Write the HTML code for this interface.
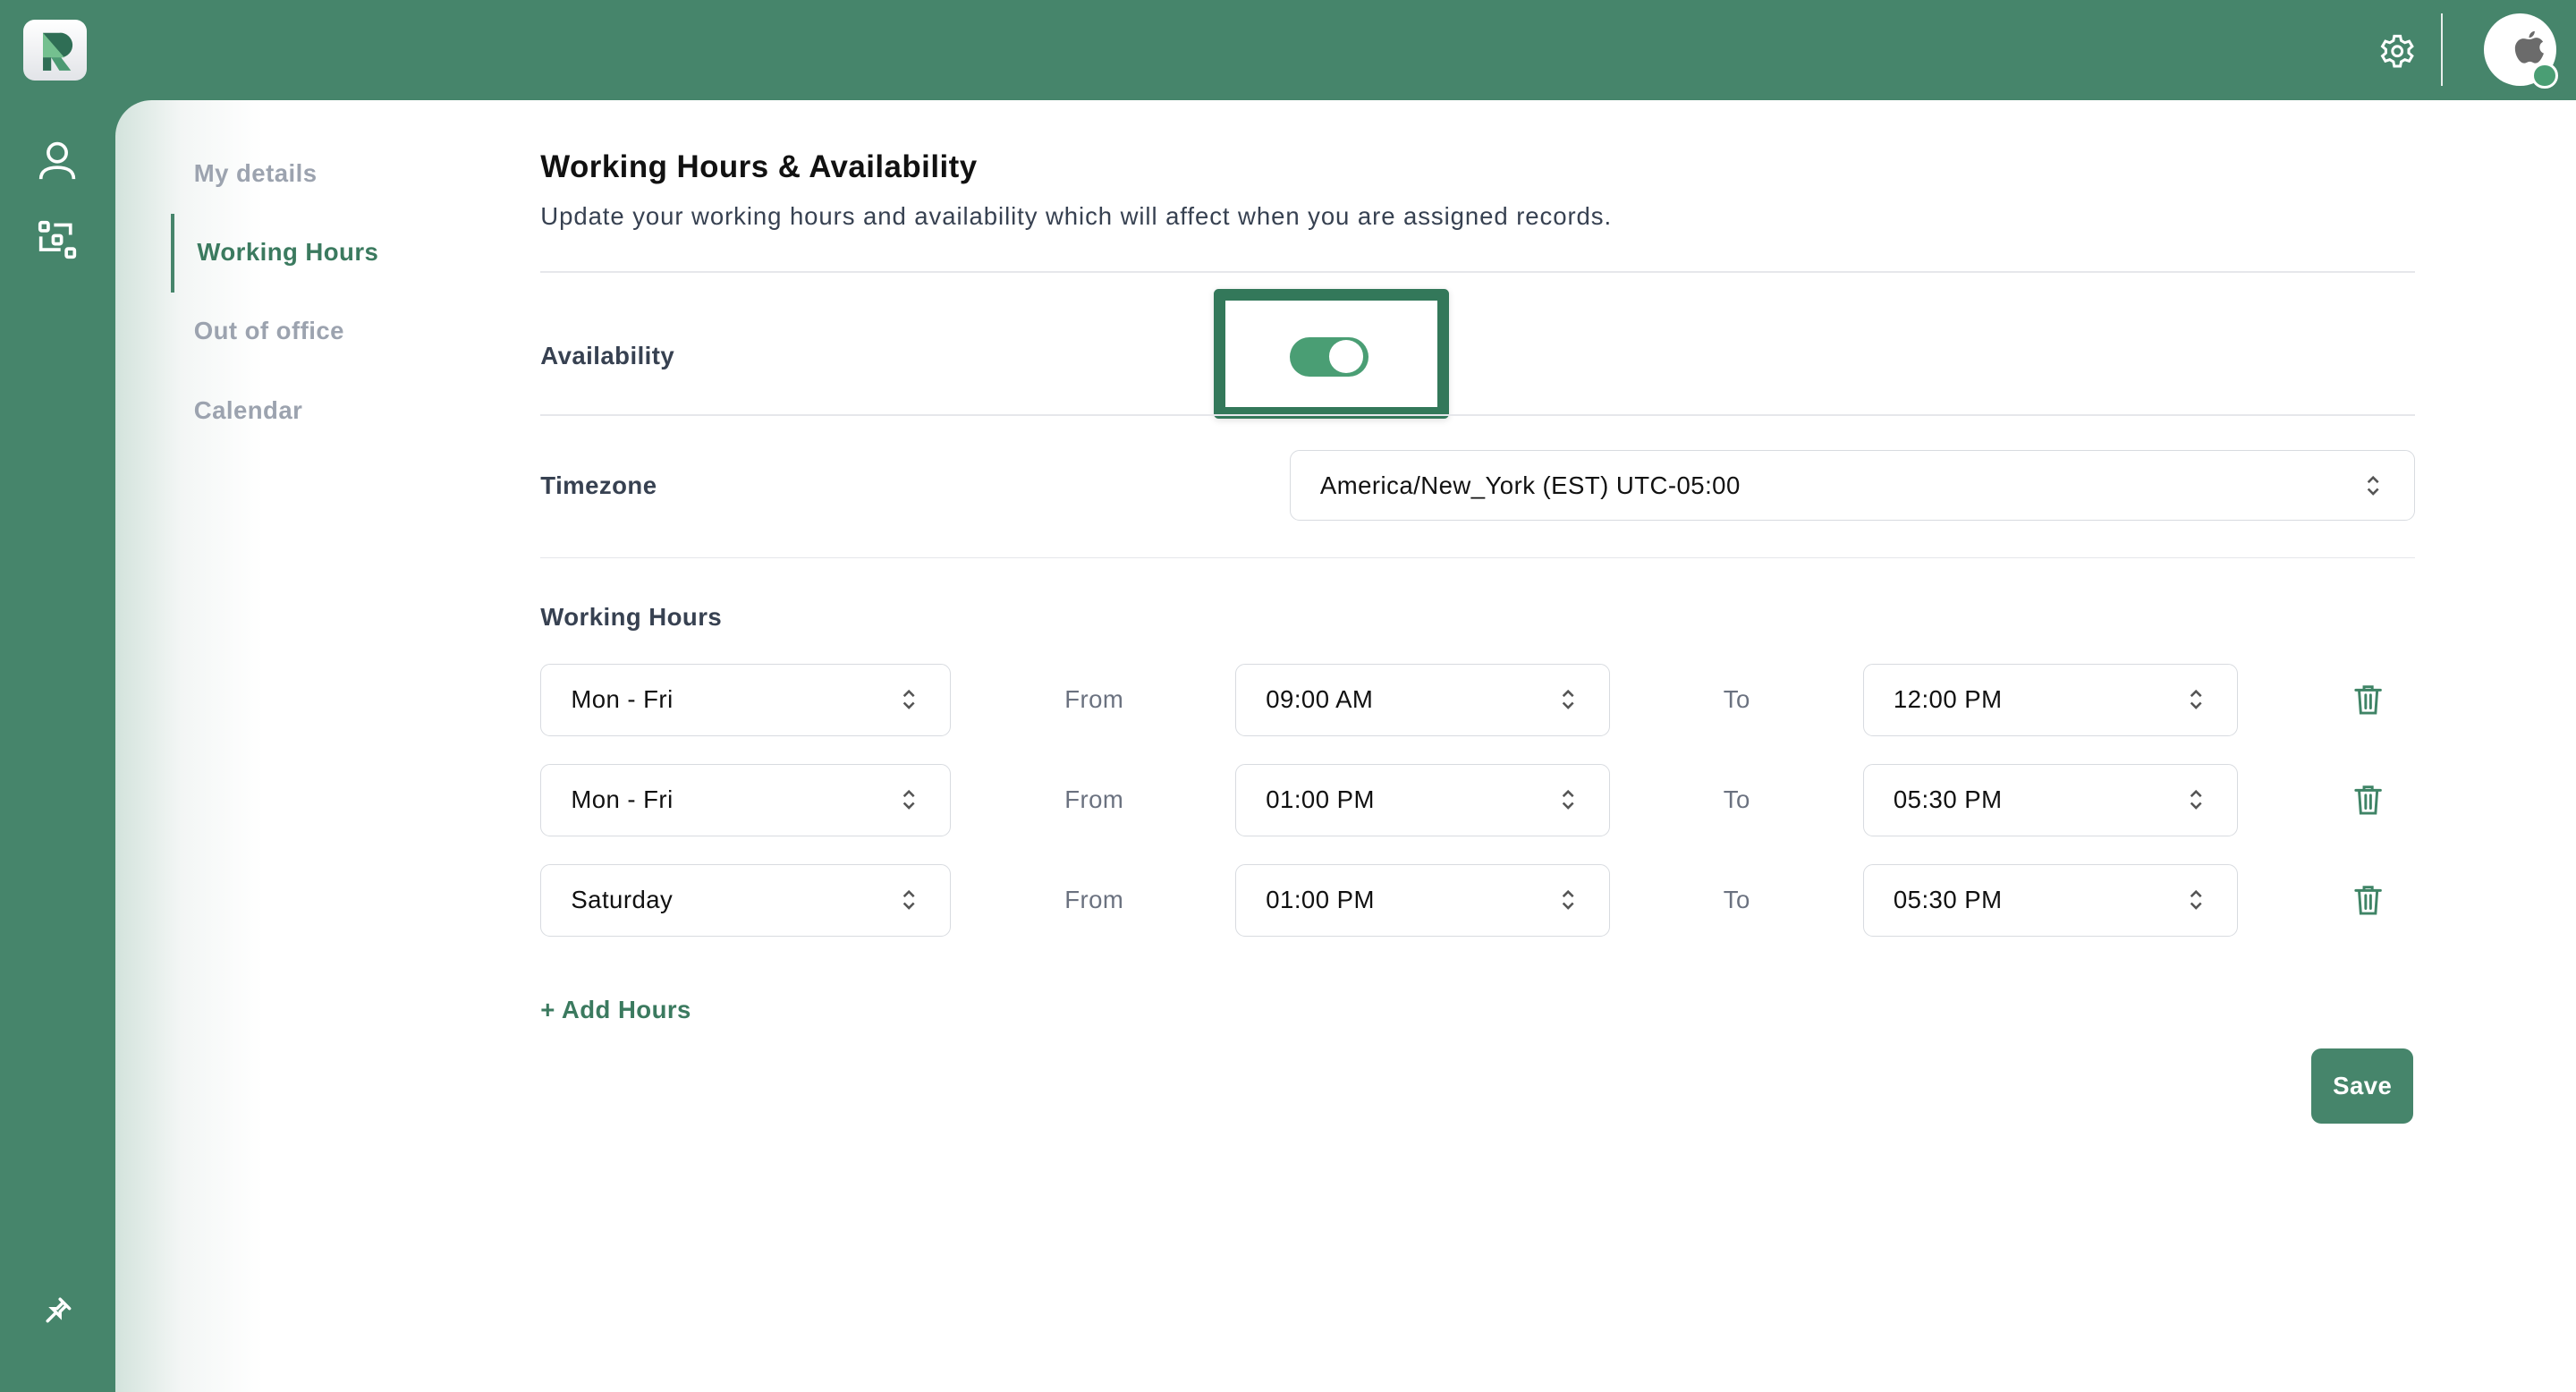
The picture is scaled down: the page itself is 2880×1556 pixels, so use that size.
<!DOCTYPE html>
<html><head><meta charset="utf-8">
<style>
*{margin:0;padding:0;box-sizing:border-box}
html,body{width:2880px;height:1556px;overflow:hidden;background:#46856b}
#w{position:absolute;left:0;top:0;width:1568px;height:847px;zoom:1.83673;font-family:"Liberation Sans",sans-serif;color:#1f2937;background:#46856b;letter-spacing:0.25px}
.a{position:absolute}
.panel{left:70px;top:61px;width:1498px;height:786px;background:linear-gradient(90deg,#d3e3dc 0px,#f3f6f5 40px,#fff 90px);border-top-left-radius:22px}
.nav{font-size:15px;color:#9ca3af;left:118px;font-weight:bold}
.t{font-size:15px}
.hr{height:1px;background:#e6e7eb;left:329px;width:1141px}
.sel{border:1px solid #d8dbe0;border-radius:6px;background:#fff;height:44px;font-size:15px;color:#111;padding-left:18px;line-height:42px}
.sel svg{position:absolute;right:20px;top:14px}
.lbl{font-size:15px;font-weight:bold;color:#374151}
.ft{font-size:15px;color:#6b7280}
</style></head><body>
<div id="w">
<div class="a" style="left:14px;top:12px;width:39px;height:37px;border-radius:7px;background:linear-gradient(#fff,#e2e4e8)">
<svg width="39" height="37" viewBox="0 0 39 37"><path d="M12 8h10a7.5 7.5 0 0 1 1 15h-11z" fill="#2f6e55"/><path d="M12 8l13 15h-13z" fill="#74c08f"/><path d="M12 23h5v8h-5z" fill="#2f6e55"/><path d="M17 23h6l6 8h-7z" fill="#4c9a72"/></svg></div>
<svg class="a" style="left:23px;top:85px" width="24" height="26" viewBox="0 0 24 26" fill="none" stroke="#fff" stroke-width="2"><circle cx="12" cy="8" r="5.5"/><path d="M2 24c0-5 4-7 10-7s10 2 10 7"/></svg>
<svg class="a" style="left:23px;top:134px" width="24" height="24" viewBox="0 0 24 24" fill="none" stroke="#fff" stroke-width="2"><rect x="1.5" y="1.5" width="5" height="5" rx="1"/><rect x="9.5" y="9.5" width="5" height="5" rx="1"/><rect x="17.5" y="17.5" width="5" height="5" rx="1"/><path d="M10 3h10v6M2 10v8h12"/></svg>
<svg class="a" style="left:26px;top:788px" width="19" height="19" viewBox="0 0 20 20" fill="none" stroke="#fff" stroke-width="2" stroke-linecap="round"><path d="M11 3l6 6M13 5l-4 4-3 0 5 5 0-3 4-4M8.5 11.5L3 17"/></svg>
<svg class="a" style="left:1448px;top:20px" width="22" height="22" viewBox="0 0 24 24" fill="none" stroke="#fff" stroke-width="1.8"><circle cx="12" cy="12" r="3.2"/><path d="M10 2h4l.6 3 2.4 1.4 2.9-1 2 3.4-2.3 2v2.4l2.3 2-2 3.4-2.9-1L14.6 19l-.6 3h-4l-.6-3L7 17.6l-2.9 1-2-3.4 2.3-2v-2.4l-2.3-2 2-3.4 2.9 1L9.4 5z"/></svg>
<div class="a" style="left:1486px;top:8px;width:1px;height:44px;background:#e8efec"></div>
<div class="a" style="left:1512px;top:8px;width:44px;height:44px;border-radius:50%;background:#fff"></div>
<svg class="a" style="left:1530px;top:18px" width="20" height="22" viewBox="0 0 20 22"><path d="M13 1c0 2-1.5 4-3.5 4 0-2 1.5-4 3.5-4zM10 6c1.5 0 2.5-1 4-1 2 0 3.5 1.5 4 2.5-3 1.5-2.5 6 .5 7-1 3-3 6-5 6-1.5 0-2-1-3.5-1s-2 1-3.5 1C4 20.5 1 16 1 11.5 1 8 3.5 5.5 6 5.5 7.5 5.5 8.5 6 10 6z" fill="#6b6b6b"/></svg>
<div class="a" style="left:1541px;top:38px;width:16px;height:16px;border-radius:50%;background:#4a9e74;border:2px solid #fff"></div>
<div class="a panel"></div>
<div class="a nav" style="top:97px">My details</div>
<div class="a" style="left:104px;top:130px;width:2px;height:48px;background:#46856b"></div>
<div class="a t" style="left:120px;top:145px;color:#3b7a5f;font-weight:bold">Working Hours</div>
<div class="a nav" style="top:193px">Out of office</div>
<div class="a nav" style="top:241px">Calendar</div>
<div class="a" style="left:329px;top:91px;font-size:19px;font-weight:bold;color:#111">Working Hours &amp; Availability</div>
<div class="a t" style="left:329px;top:123px;color:#374151;letter-spacing:0.5px">Update your working hours and availability which will affect when you are assigned records.</div>
<div class="a hr" style="top:165px"></div>
<div class="a lbl" style="left:329px;top:208px">Availability</div>
<div class="a" style="left:739px;top:176px;width:143px;height:79px;border:7.5px solid #33785a;border-radius:3px;background:#fff;box-shadow:0 1px 4px rgba(0,0,0,.12)"></div>
<div class="a" style="left:785px;top:205px;width:48px;height:24px;border-radius:12px;background:#4a9e74"></div>
<div class="a" style="left:809px;top:207px;width:21px;height:20px;border-radius:50%;background:#fff"></div>
<div class="a hr" style="top:252px"></div>
<div class="a lbl" style="left:329px;top:287px">Timezone</div>
<div class="a sel" style="left:785px;top:274px;width:685px;height:43px">America/New_York (EST) UTC-05:00<svg width="10" height="14" viewBox="0 0 10 14" fill="none" stroke="#555" stroke-width="1.4"><path d="M2 5l3-3 3 3M2 9l3 3 3-3"/></svg></div>
<div class="a hr" style="top:339px"></div>
<div class="a lbl" style="left:329px;top:367px">Working Hours</div>

<div class="a sel" style="left:329px;top:404px;width:250px">Mon - Fri<svg width="10" height="14" viewBox="0 0 10 14" fill="none" stroke="#555" stroke-width="1.4"><path d="M2 5l3-3 3 3M2 9l3 3 3-3"/></svg></div>
<div class="a ft" style="left:648px;top:417px">From</div>
<div class="a sel" style="left:752px;top:404px;width:228px">09:00 AM<svg width="10" height="14" viewBox="0 0 10 14" fill="none" stroke="#555" stroke-width="1.4"><path d="M2 5l3-3 3 3M2 9l3 3 3-3"/></svg></div>
<div class="a ft" style="left:1049px;top:417px">To</div>
<div class="a sel" style="left:1134px;top:404px;width:228px">12:00 PM<svg width="10" height="14" viewBox="0 0 10 14" fill="none" stroke="#555" stroke-width="1.4"><path d="M2 5l3-3 3 3M2 9l3 3 3-3"/></svg></div>

<div class="a sel" style="left:329px;top:465px;width:250px">Mon - Fri<svg width="10" height="14" viewBox="0 0 10 14" fill="none" stroke="#555" stroke-width="1.4"><path d="M2 5l3-3 3 3M2 9l3 3 3-3"/></svg></div>
<div class="a ft" style="left:648px;top:478px">From</div>
<div class="a sel" style="left:752px;top:465px;width:228px">01:00 PM<svg width="10" height="14" viewBox="0 0 10 14" fill="none" stroke="#555" stroke-width="1.4"><path d="M2 5l3-3 3 3M2 9l3 3 3-3"/></svg></div>
<div class="a ft" style="left:1049px;top:478px">To</div>
<div class="a sel" style="left:1134px;top:465px;width:228px">05:30 PM<svg width="10" height="14" viewBox="0 0 10 14" fill="none" stroke="#555" stroke-width="1.4"><path d="M2 5l3-3 3 3M2 9l3 3 3-3"/></svg></div>

<div class="a sel" style="left:329px;top:526px;width:250px">Saturday<svg width="10" height="14" viewBox="0 0 10 14" fill="none" stroke="#555" stroke-width="1.4"><path d="M2 5l3-3 3 3M2 9l3 3 3-3"/></svg></div>
<div class="a ft" style="left:648px;top:539px">From</div>
<div class="a sel" style="left:752px;top:526px;width:228px">01:00 PM<svg width="10" height="14" viewBox="0 0 10 14" fill="none" stroke="#555" stroke-width="1.4"><path d="M2 5l3-3 3 3M2 9l3 3 3-3"/></svg></div>
<div class="a ft" style="left:1049px;top:539px">To</div>
<div class="a sel" style="left:1134px;top:526px;width:228px">05:30 PM<svg width="10" height="14" viewBox="0 0 10 14" fill="none" stroke="#555" stroke-width="1.4"><path d="M2 5l3-3 3 3M2 9l3 3 3-3"/></svg></div>

<svg class="a" style="left:1433px;top:416px" width="17" height="20" viewBox="0 0 17 20" fill="none" stroke="#3f8466" stroke-width="1.6" stroke-linecap="round"><path d="M1 4h15M6 4V2h5v2M3 4l1 14h9l1-14M7 7v8M10 7v8"/></svg>
<svg class="a" style="left:1433px;top:477px" width="17" height="20" viewBox="0 0 17 20" fill="none" stroke="#3f8466" stroke-width="1.6" stroke-linecap="round"><path d="M1 4h15M6 4V2h5v2M3 4l1 14h9l1-14M7 7v8M10 7v8"/></svg>
<svg class="a" style="left:1433px;top:538px" width="17" height="20" viewBox="0 0 17 20" fill="none" stroke="#3f8466" stroke-width="1.6" stroke-linecap="round"><path d="M1 4h15M6 4V2h5v2M3 4l1 14h9l1-14M7 7v8M10 7v8"/></svg>

<div class="a" style="left:329px;top:606px;font-size:15px;font-weight:bold;color:#3b7a5f">+ Add Hours</div>
<div class="a" style="left:1407px;top:638px;width:62px;height:46px;border-radius:6px;background:#46856b;color:#fff;font-size:15px;font-weight:bold;text-align:center;line-height:46px">Save</div>
</div>
</body></html>
